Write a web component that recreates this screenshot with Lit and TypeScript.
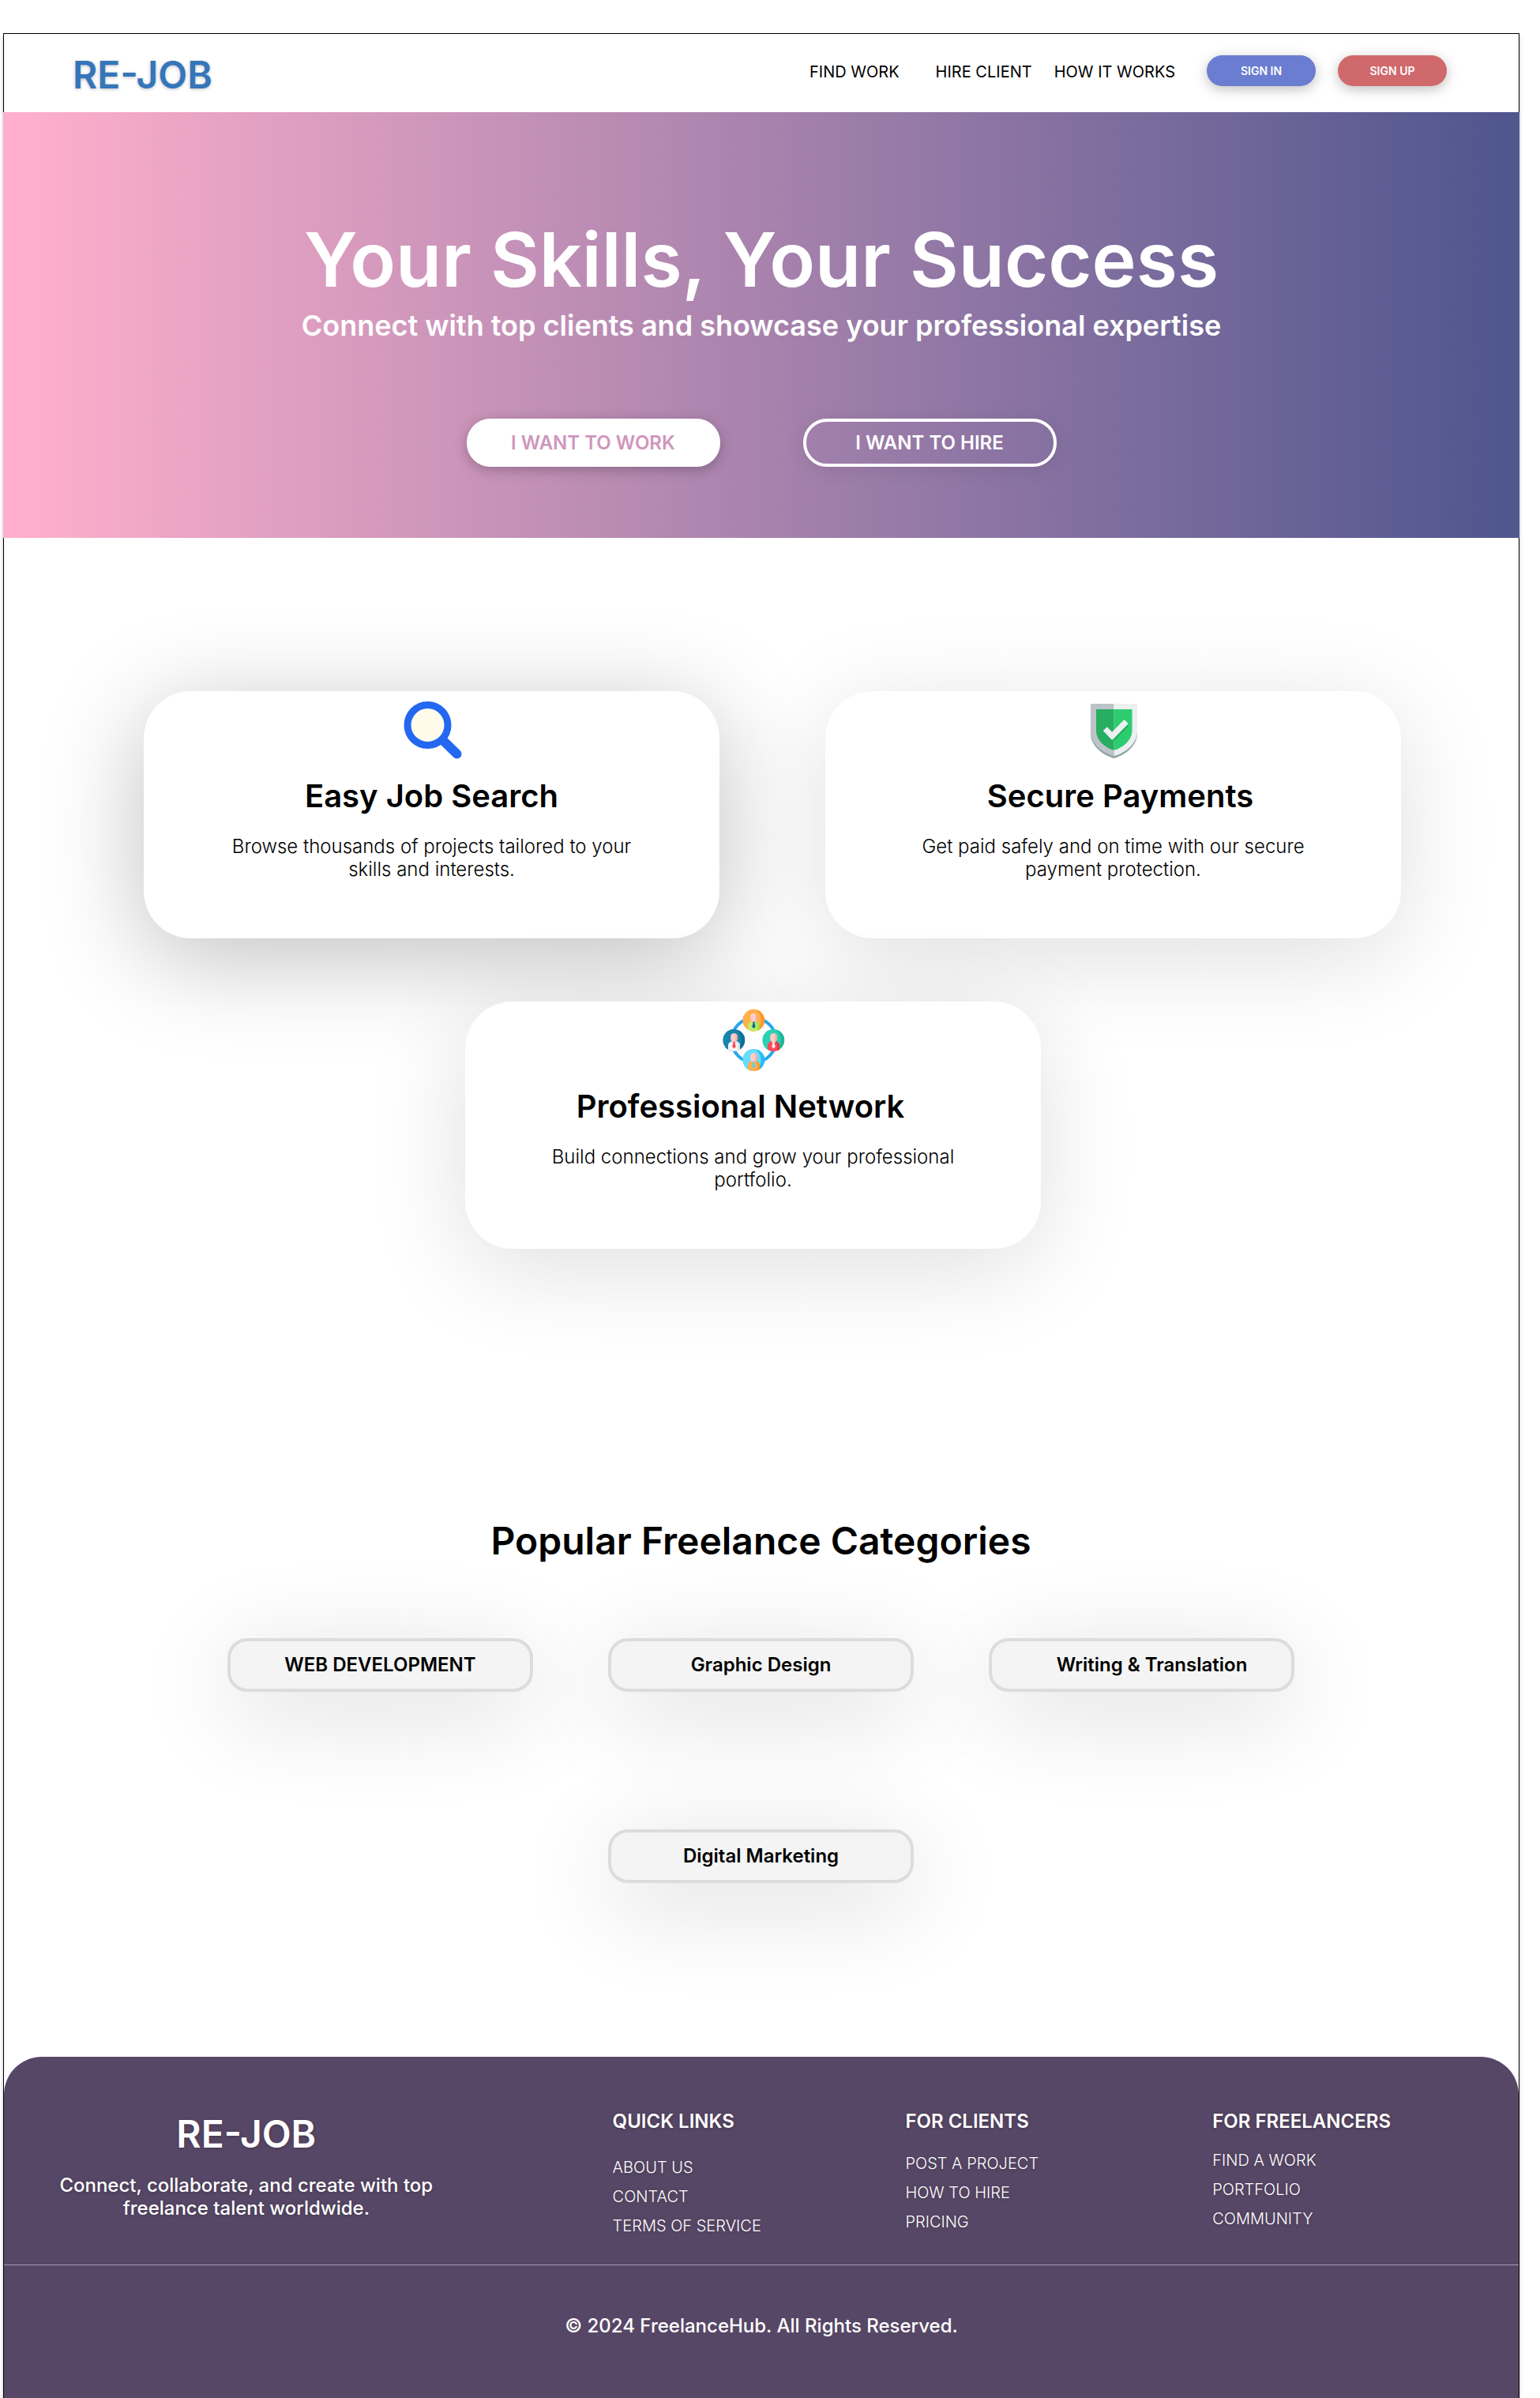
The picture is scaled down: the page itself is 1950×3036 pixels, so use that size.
import { LitElement, html, css, svg, TemplateResult } from "lit";
import { customElement, property } from "lit/decorators.js";
import { classMap } from "lit/directives/class-map.js";

interface Feature {
  title: string;
  text: string;
  icon: string;
  place: string;
  lean?: "left" | "right";
}

interface Category {
  label: string;
  inset?: boolean;
  middle?: boolean;
}

interface LinkGroup {
  title: string;
  spacing: string;
  links: string[];
}

const FEATURES: Feature[] = [
  {
    title: "Easy Job Search",
    text: "Browse thousands of projects tailored to your skills and interests.",
    icon: "search",
    place: "first",
  },
  {
    title: "Secure Payments",
    text: "Get paid safely and on time with our secure payment protection.",
    icon: "shield",
    place: "second",
    lean: "right",
  },
  {
    title: "Professional Network",
    text: "Build connections and grow your professional portfolio.",
    icon: "network",
    place: "third",
    lean: "left",
  },
];

const CATEGORIES: Category[] = [
  { label: "WEB DEVELOPMENT" },
  { label: "Graphic Design" },
  { label: "Writing & Translation", inset: true },
  { label: "Digital Marketing", middle: true },
];

const LINK_GROUPS: LinkGroup[] = [
  { title: "QUICK LINKS", spacing: "loose", links: ["ABOUT US", "CONTACT", "TERMS OF SERVICE"] },
  { title: "FOR CLIENTS", spacing: "medium", links: ["POST A PROJECT", "HOW TO HIRE", "PRICING"] },
  { title: "FOR FREELANCERS", spacing: "tight", links: ["FIND A WORK", "PORTFOLIO", "COMMUNITY"] },
];

/* One round portrait of the network icon, centred on (x, y). */
const member = (
  id: string,
  x: number,
  y: number,
  light: string,
  dark: string,
  shirt: string,
  shirtDark: string,
  tie: string,
) => svg`
  <g transform="translate(${x} ${y})">
    <clipPath id=${id}><circle r="14"></circle></clipPath>
    <g clip-path="url(#${id})">
      <circle r="14" fill=${dark}></circle>
      <ellipse cx="-5" cy="0" rx="14" ry="16" fill=${light}></ellipse>
      <path d="M-7.5 14V6.500C-7.500 3.500-5 1.500-2 1.500H2C5 1.500 7.500 3.500 7.500 6.500V14Z" fill=${shirt}></path>
      <path d="M2 1.500C5 1.500 7.500 3.500 7.500 6.500V14H4.500V6.500C4.500 4 3.500 2.500 2 1.500Z" fill=${shirtDark}></path>
      <path d="M-2.500 0H2.500V2L0 4.500L-2.500 2Z" fill="#f9aca2"></path>
      <rect x="-4.300" y="-8.700" width="8.600" height="10.600" rx="4" fill="#ffcdc4"></rect>
      <path d="M1.500-8.500C3.300-8 4.300-6.500 4.300-4.700V-2C4.300 0 3.300 1.300 1.500 1.800C2.300-1 2.300-6 1.500-8.500Z" fill="#f9aca2"></path>
      <path d="M-1.300 2H1.300L1 4L2.300 8L0 10.500L-2.300 8L-1 4Z" fill=${tie}></path>
    </g>
  </g>
`;

const ICONS: Record<string, TemplateResult> = {
  search: html`
    <svg class="icon" viewBox="0 0 80 80" aria-hidden="true">
      <path d="M54 54.500L71.500 71.500" stroke="#2468f2" stroke-width="12" stroke-linecap="round"></path>
      <circle cx="34.500" cy="35" r="25.500" fill="#fffbeb" stroke="#2468f2" stroke-width="9"></circle>
    </svg>
  `,
  shield: html`
    <svg class="icon" viewBox="0 0 80 80" aria-hidden="true">
      <path d="M11 40V46C11 60 25 73 40.500 77C56 73 70 60 70 46V40Z" fill="#95a5a6"></path>
      <path d="M11 8H40.500V74C25 70 11 58 11 43Z" fill="#bdc3c7"></path>
      <path d="M40.500 8H70V43C70 58 56 70 40.500 74Z" fill="#ecf0f1"></path>
      <path d="M18 15H40.500V67C29 63.500 18 54 18 42Z" fill="#27ae60"></path>
      <path d="M40.500 15H63.500V42C63.500 54 52 63.500 40.500 67Z" fill="#2ecc71"></path>
      <path d="M40.500 52L58.800 33.300V36.500L40.500 55Z" fill="#27ae60"></path>
      <path d="M26.800 42.300L31.800 37.300L38.200 43.700L53.500 28L58.800 33.300L38.200 54Z" fill="#ecf0f1"></path>
    </svg>
  `,
  network: html`
    <svg class="icon" viewBox="0 0 80 80" aria-hidden="true">
      <circle cx="40.500" cy="41" r="28" fill="none" stroke="#26a6f0" stroke-width="4"></circle>
      ${member("top", 40.5, 15.8, "#ffb04c", "#ff9a27", "#bfee6c", "#a6dd4a", "#0b6e8e")}
      ${member("left", 15.5, 41, "#1784ae", "#0f6f94", "#f6f4f5", "#e4e1e3", "#ff4155")}
      ${member("right", 65.5, 41, "#2ad1b4", "#1fb79b", "#ff4a5c", "#ea3549", "#f6f4f5")}
      ${member("bottom", 40.5, 66, "#68dcfb", "#25bdf5", "#ffb04c", "#ff9a27", "#57d4f5")}
    </svg>
  `,
};

@customElement("feature-card")
export class FeatureCard extends LitElement {
  static styles = css`
    :host {
      display: block;
      border-radius: 60px;
      background: #ffffff;
      box-shadow: 0 24px 124px rgba(0, 0, 0, 0.13);
    }
    .card {
      display: flex;
      flex-direction: column;
      align-items: center;
      padding: 8px 80px 73px;
      text-align: center;
    }
    .icon {
      display: block;
      width: 80px;
      height: 80px;
    }
    .title {
      margin: 21px 0 25px;
      font-size: 40px;
      font-weight: 600;
      line-height: 48px;
    }
    .lean-right {
      padding-left: 18px;
    }
    .lean-left {
      padding-right: 32px;
    }
    .text {
      max-width: 540px;
      margin: 0;
      font-size: 24px;
      font-weight: 300;
      line-height: 29px;
    }
  `;

  @property({ attribute: false }) feature!: Feature;

  render() {
    const { icon, title, text, lean } = this.feature;
    const titleClasses = {
      title: true,
      "lean-left": lean === "left",
      "lean-right": lean === "right",
    };
    return html`
      <article class="card">
        ${ICONS[icon]}
        <h2 class=${classMap(titleClasses)}>${title}</h2>
        <p class="text">${text}</p>
      </article>
    `;
  }
}

@customElement("app-root")
export class AppRoot extends LitElement {
  static styles = css`
    * {
      box-sizing: border-box;
    }
    :host {
      display: block;
      padding: 42px 26px 0 4px;
      background: #ffffff;
      color: #000000;
      font-family: Inter, "Liberation Sans", sans-serif;
    }
    a {
      color: inherit;
      text-decoration: none;
    }
    button {
      border: 0;
      font-family: inherit;
      cursor: pointer;
    }
    h1,
    h2,
    p,
    ul {
      margin: 0;
      padding: 0;
    }
    ul {
      list-style: none;
    }
    .frame {
      border: 1px solid #000000;
      border-bottom: 0;
      background: #ffffff;
      box-shadow: 0 4px 4px rgba(0, 0, 0, 0.25);
    }

    .header {
      display: flex;
      justify-content: space-between;
      padding: 23px 91px 18px 87px;
    }
    .logo {
      color: #3575ba;
      font-size: 48px;
      font-weight: 600;
      line-height: 58px;
      text-shadow: 0 1px 4px rgba(0, 0, 0, 0.25);
    }
    .menu {
      display: flex;
      align-items: center;
      height: 50px;
      font-size: 20px;
      line-height: 24px;
    }
    .links {
      display: flex;
      gap: 28px;
      margin: 0 40px 0 46px;
    }
    .account {
      display: flex;
      gap: 28px;
      padding-bottom: 4px;
    }
    .sign {
      width: 138px;
      height: 39px;
      border-radius: 20px;
      color: #ffffff;
      font-size: 14px;
      font-weight: 600;
      box-shadow: 0 4px 16px rgba(0, 0, 0, 0.25);
    }
    .sign-in {
      background: #6a7dd0;
    }
    .sign-up {
      background: #d0696c;
    }

    .hero {
      display: flex;
      flex-direction: column;
      align-items: center;
      margin: 0 -1px;
      padding: 129px 40px 90px;
      background: linear-gradient(90deg, #ffafcc 1%, #50568e 99%);
      color: #ffffff;
      text-align: center;
    }
    .headline {
      font-size: 95px;
      font-weight: 600;
      line-height: 116px;
    }
    .tagline {
      margin-top: 3px;
      font-size: 36px;
      font-weight: 600;
      line-height: 44px;
    }
    .actions {
      display: flex;
      gap: 105px;
      margin-top: 96px;
    }
    .action {
      width: 321px;
      height: 61px;
      border: 4px solid #ffffff;
      border-radius: 30px;
      font-size: 24px;
      font-weight: 600;
      box-shadow: 0 4px 16px rgba(0, 0, 0, 0.25);
    }
    .work {
      background: #ffffff;
      color: #d096bc;
    }
    .hire {
      background: transparent;
      color: #ffffff;
      box-shadow: 0 4px 24px rgba(0, 0, 0, 0.08);
    }

    .features {
      display: grid;
      grid-template-columns: 407fr 322fr 134fr 273fr 456fr;
      row-gap: 80px;
      padding: 194px 149px 0 177px;
    }
    .first {
      grid-column: 1 / 3;
      box-shadow: 0 24px 124px rgba(0, 0, 0, 0.25);
    }
    .second {
      grid-column: 4 / 6;
    }
    .third {
      grid-column: 2 / 5;
    }

    .categories {
      padding: 341px 284px 220px 283px;
    }
    .section-title {
      font-size: 48px;
      font-weight: 600;
      line-height: 58px;
      text-align: center;
    }
    .category-list {
      display: grid;
      grid-template-columns: repeat(3, 1fr);
      gap: 174px 95px;
      margin-top: 94px;
    }
    .category {
      height: 68px;
      padding: 0 6px 2px;
      border: 4px solid #dcdcdc;
      border-radius: 25px;
      background: #f4f4f4;
      color: #000000;
      font-size: 24px;
      font-weight: 600;
      box-shadow: 0 24px 124px rgba(0, 0, 0, 0.16);
    }
    .inset {
      padding-left: 32px;
    }
    .middle {
      grid-column: 2;
    }

    .footer {
      border-radius: 48px 48px 0 0;
      background: #574766;
      color: #ffffff;
    }
    .footer-top {
      display: grid;
      grid-template-columns: 771fr 371fr 389fr 388fr;
      align-items: start;
      padding: 67px 0 37px;
      border-bottom: 1px solid #a89cb0;
      text-shadow: 0 1px 4px rgba(0, 0, 0, 0.25);
    }
    .brand {
      display: flex;
      flex-direction: column;
      align-items: center;
      padding-right: 157px;
      text-align: center;
    }
    .brand-name {
      font-size: 48px;
      font-weight: 600;
      line-height: 62px;
    }
    .brand-text {
      max-width: 500px;
      margin-top: 19px;
      font-size: 24px;
      font-weight: 500;
      line-height: 29px;
    }
    .group-title {
      font-size: 24px;
      font-weight: 600;
      line-height: 29px;
    }
    .group-links {
      display: grid;
      gap: 13px;
      font-size: 20px;
      font-weight: 300;
      line-height: 24px;
    }
    .loose {
      margin-top: 32px;
    }
    .medium {
      margin-top: 27px;
    }
    .tight {
      margin-top: 23px;
    }
    .copyright {
      padding: 62px 0 77px;
      font-size: 24px;
      font-weight: 500;
      line-height: 29px;
      text-align: center;
    }
  `;

  private renderHeader() {
    return html`
      <header class="header">
        <a class="logo" href="#">RE-JOB</a>
        <nav class="menu">
          <a href="#find-work">FIND WORK</a>
          <div class="links">
            <a href="#hire">HIRE CLIENT</a>
            <a href="#how">HOW IT WORKS</a>
          </div>
          <div class="account">
            <button class="sign sign-in" type="button">SIGN IN</button>
            <button class="sign sign-up" type="button">SIGN UP</button>
          </div>
        </nav>
      </header>
    `;
  }

  private renderHero() {
    return html`
      <section class="hero">
        <h1 class="headline">Your Skills, Your Success</h1>
        <p class="tagline">Connect with top clients and showcase your professional expertise</p>
        <div class="actions">
          <button class="action work" type="button">I WANT TO WORK</button>
          <button class="action hire" type="button">I WANT TO HIRE</button>
        </div>
      </section>
    `;
  }

  private renderFooter() {
    return html`
      <footer class="footer">
        <div class="footer-top">
          <div class="brand">
            <p class="brand-name">RE-JOB</p>
            <p class="brand-text">Connect, collaborate, and create with top freelance talent worldwide.</p>
          </div>
          ${LINK_GROUPS.map(
            (group) => html`
              <nav>
                <h2 class="group-title">${group.title}</h2>
                <ul class="group-links ${group.spacing}">
                  ${group.links.map((link) => html`<li><a href="#">${link}</a></li>`)}
                </ul>
              </nav>
            `,
          )}
        </div>
        <p class="copyright">© 2024 FreelanceHub. All Rights Reserved.</p>
      </footer>
    `;
  }

  render() {
    return html`
      <div class="frame">
        ${this.renderHeader()}
        <main>
          ${this.renderHero()}
          <section class="features">
            ${FEATURES.map(
              (feature) => html`<feature-card class=${feature.place} .feature=${feature}></feature-card>`,
            )}
          </section>
          <section class="categories">
            <h2 class="section-title">Popular Freelance Categories</h2>
            <div class="category-list">
              ${CATEGORIES.map(
                ({ label, inset, middle }) => html`
                  <button
                    class=${classMap({ category: true, inset: !!inset, middle: !!middle })}
                    type="button"
                  >${label}</button>
                `,
              )}
            </div>
          </section>
        </main>
        ${this.renderFooter()}
      </div>
    `;
  }
}
